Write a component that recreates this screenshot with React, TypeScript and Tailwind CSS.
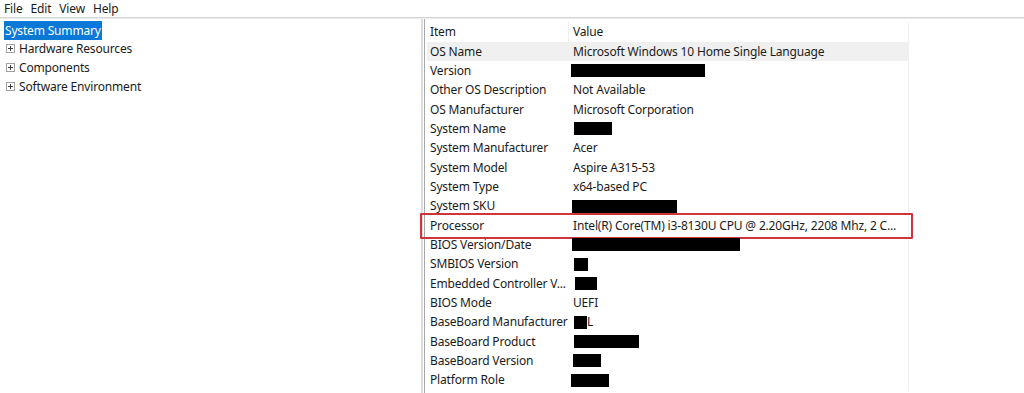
import React from 'react';

type Row = { item: string; value?: string; redact?: { w: number; ml?: number; tail?: string }; hl?: boolean; boxed?: boolean };

const rows: Row[] = [
  { item: 'OS Name', value: 'Microsoft Windows 10 Home Single Language', hl: true },
  { item: 'Version', redact: { w: 134, ml: -2 } },
  { item: 'Other OS Description', value: 'Not Available' },
  { item: 'OS Manufacturer', value: 'Microsoft Corporation' },
  { item: 'System Name', redact: { w: 38, ml: 1 } },
  { item: 'System Manufacturer', value: 'Acer' },
  { item: 'System Model', value: 'Aspire A315-53' },
  { item: 'System Type', value: 'x64-based PC' },
  { item: 'System SKU', redact: { w: 105, ml: -1 } },
  { item: 'Processor', value: 'Intel(R) Core(TM) i3-8130U CPU @ 2.20GHz, 2208 Mhz, 2 C...', boxed: true },
  { item: 'BIOS Version/Date', redact: { w: 168, ml: -1 } },
  { item: 'SMBIOS Version', redact: { w: 14, ml: 1 } },
  { item: 'Embedded Controller V...', redact: { w: 22, ml: 2 } },
  { item: 'BIOS Mode', value: 'UEFI' },
  { item: 'BaseBoard Manufacturer', redact: { w: 13, ml: 1, tail: 'L' } },
  { item: 'BaseBoard Product', redact: { w: 65, ml: 1 } },
  { item: 'BaseBoard Version', redact: { w: 28 } },
  { item: 'Platform Role', redact: { w: 38, ml: -2 } },
];

function Plus() {
  return (
    <svg width="9" height="9" viewBox="0 0 9 9" className="shrink-0">
      <rect x="0.5" y="0.5" width="8" height="8" fill="white" stroke="#a0a0a0" />
      <path d="M2 4.5h5M4.5 2v5" stroke="#404040" />
    </svg>
  );
}

export default function App() {
  return (
    <div
      className="h-[393px] w-[1024px] bg-white text-[#1b1b1b] flex flex-col overflow-hidden text-[12px] tracking-[-0.17px]"
      style={{ fontFamily: '"Noto Sans", "Open Sans", sans-serif' }}
    >
      <div className="h-[17px] flex items-center gap-[8px] pl-[4px] leading-none">
        <span>File</span>
        <span>Edit</span>
        <span>View</span>
        <span>Help</span>
      </div>
      <div className="h-[2px] bg-[#d4d4d4] border-b border-[#ececec]" />
      <div className="flex flex-1 min-h-0">
        <div className="w-[421px] pt-[2px] pl-[4px]">
          <div className="h-[19px] flex items-center">
            <span className="bg-[#0a78d6] text-white px-[1px] h-[19px] flex items-center">System Summary</span>
          </div>
          <div className="-mt-[1px]">
            {['Hardware Resources', 'Components', 'Software Environment'].map((t) => (
              <div key={t} className="h-[19px] flex items-center gap-[4px] pl-[2px]">
                <Plus />
                <span>{t}</span>
              </div>
            ))}
          </div>
        </div>
        <div className="w-[2px] bg-[#dcdcdc]" />
        <div className="w-[2px] bg-white border-r border-[#a8a8a8]" />
        <div className="flex-1 pt-[3px] pl-[2px]">
          <div className="w-[482px] border-r border-[#f0f0f0]">
            <div className="h-[20px] flex items-center">
              <div className="w-[142px] pl-[3px] border-r border-[#eeeeee] h-full flex items-center">Item</div>
              <div className="pl-[4px]">Value</div>
            </div>
            {rows.map((r) => (
              <div
                key={r.item}
                className={`h-[19.33px] flex items-center relative ${r.hl ? 'bg-[#f0f0f0]' : ''}`}
              >
                <div className="w-[142px] pl-[3px] whitespace-nowrap">{r.item}</div>
                <div className="pl-[4px] whitespace-nowrap flex items-center">
                  {r.value}
                  {r.redact && (
                    <>
                      <span
                        className="inline-block h-[13px] bg-black"
                        style={{ width: r.redact.w, marginLeft: r.redact.ml ?? 0 }}
                      />
                      {r.redact.tail && <span>{r.redact.tail}</span>}
                    </>
                  )}
                </div>
                {r.boxed && (
                  <div className="absolute left-[-7px] right-[-5px] top-[-3px] bottom-[-4px] border-2 border-[#d0343a] rounded-[1px]" />
                )}
              </div>
            ))}
          </div>
        </div>
      </div>
    </div>
  );
}
